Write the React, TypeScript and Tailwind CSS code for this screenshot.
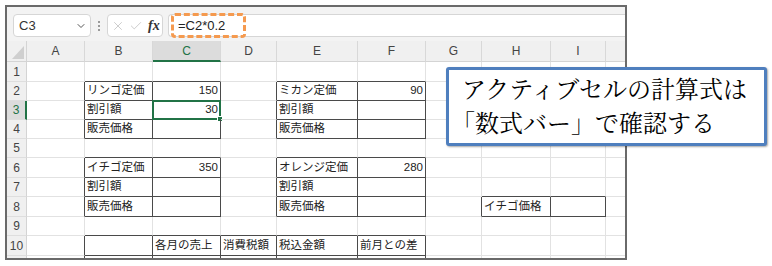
import { Check, ChevronDown, X } from "lucide-react";

type Cell = { t?: string; n?: boolean };

const COL_W = ["w-[20px]", "w-[58px]", "w-[68px]", "w-[68px]", "w-[56px]", "w-[81px]", "w-[68px]", "w-[56px]", "w-[69px]", "w-[55px]", "w-[40px]"];
const LETTERS = ["", "A", "B", "C", "D", "E", "F", "G", "H", "I", ""];
const ROW_H = ["h-[20px]", "h-[19px]", "h-[19px]", "h-[19px]", "h-[19px]", "h-[20px]", "h-[19px]", "h-[20px]", "h-[19px]", "h-[20px]", "h-[20px]"];

// row number -> column index -> cell
const DATA: Record<number, Record<number, Cell>> = {
  2: { 2: { t: "リンゴ定価" }, 3: { t: "150", n: true }, 5: { t: "ミカン定価" }, 6: { t: "90", n: true } },
  3: { 2: { t: "割引額" }, 3: { t: "30", n: true }, 5: { t: "割引額" } },
  4: { 2: { t: "販売価格" }, 5: { t: "販売価格" } },
  6: { 2: { t: "イチゴ定価" }, 3: { t: "350", n: true }, 5: { t: "オレンジ定価" }, 6: { t: "280", n: true } },
  7: { 2: { t: "割引額" }, 5: { t: "割引額" } },
  8: { 2: { t: "販売価格" }, 5: { t: "販売価格" }, 8: { t: "イチゴ価格" } },
  10: { 3: { t: "各月の売上" }, 4: { t: "消費税額" }, 5: { t: "税込金額" }, 6: { t: "前月との差" } },
};

function boxed(r: number, c: number) {
  if ((r >= 2 && r <= 4) || (r >= 6 && r <= 8)) {
    if ([2, 3, 5, 6].includes(c)) return true;
  }
  if (r === 8 && (c === 8 || c === 9)) return true;
  if (r >= 10 && c >= 2 && c <= 6) return true;
  return false;
}

function HeaderRow() {
  return (
    <div className="flex h-[21px] bg-[#f0f0f0]">
      {LETTERS.map((l, c) => {
        if (c === 0) {
          return (
            <div key={c} className={`${COL_W[c]} shrink-0 border-r border-b border-[#d4d4d4] flex items-end justify-end p-[2px]`}>
              <svg width="12" height="13" viewBox="0 0 12 13">
                <polygon points="12,0 12,13 0,13" fill="#cfcfcf" />
              </svg>
            </div>
          );
        }
        const active = c === 3;
        return (
          <div
            key={c}
            className={`${COL_W[c]} shrink-0 flex items-center justify-center border-r border-[#d8d8d8] text-[12px] ${
              active ? "bg-[#dcdcdc] text-[#217346] border-b-2 border-b-[#217346]" : "text-[#444] border-b border-b-[#d4d4d4]"
            }`}
          >
            {l}
          </div>
        );
      })}
    </div>
  );
}

function Row({ r }: { r: number }) {
  const row = DATA[r] || {};
  return (
    <div className={`flex ${ROW_H[r - 1]}`}>
      {COL_W.map((w, c) => {
        if (c === 0) {
          const active = r === 3;
          return (
            <div
              key={c}
              className={`${w} shrink-0 flex items-center justify-center text-[12px] border-b border-b-[#dedede] ${
                active ? "bg-[#dcdcdc] text-[#217346] border-r-2 border-r-[#217346]" : "bg-[#f0f0f0] text-[#444] border-r border-r-[#d4d4d4]"
              }`}
            >
              {r <= 10 ? r : ""}
            </div>
          );
        }
        const cell = row[c];
        const darkR = boxed(r, c) || boxed(r, c + 1);
        const darkB = boxed(r, c) || boxed(r + 1, c);
        return (
          <div
            key={c}
            className={`${w} shrink-0 relative flex items-center px-[2px] text-[11.5px] text-[#222] border-r border-b ${
              darkR ? "border-r-[#4a4a4a]" : "border-r-[#e2e2e2]"
            } ${darkB ? "border-b-[#4a4a4a]" : "border-b-[#e2e2e2]"} ${cell?.n ? "justify-end" : "justify-start"}`}
          >
            <span className="whitespace-nowrap">{cell?.t}</span>
            {r === 3 && c === 3 && (
              <div className="absolute -left-px -top-px -right-px -bottom-px border-2 border-[#217346]">
                <div className="absolute -right-[4px] -bottom-[4px] w-[6px] h-[6px] bg-[#217346] border border-white" />
              </div>
            )}
          </div>
        );
      })}
    </div>
  );
}

export default function App() {
  return (
    <div className="relative w-[772px] h-[266px] bg-white overflow-hidden font-['Liberation_Sans','Noto_Sans_CJK_JP',sans-serif]">
      <div className="ml-[5px] mt-[5px] w-[622px] h-[255px] border-2 border-[#6a6a6a] overflow-hidden bg-white">
        {/* formula bar */}
        <div className="flex items-start h-[34px] bg-[#f3f3f3] pl-[6px] pt-[7px]">
          <div className="w-[78px] h-[23px] shrink-0 rounded-[4px] border border-[#d6d6d6] bg-white flex items-center justify-between pl-[5px] pr-[3px] text-[13px] text-[#333]">
            <span>C3</span>
            <ChevronDown size={12} strokeWidth={2} color="#555" />
          </div>
          <div className="ml-[7px] h-[23px] flex flex-col justify-center gap-[2px]">
            <div className="w-[2px] h-[2px] bg-[#9a9a9a]" />
            <div className="w-[2px] h-[2px] bg-[#9a9a9a]" />
            <div className="w-[2px] h-[2px] bg-[#9a9a9a]" />
          </div>
          <div className="ml-[7px] w-[56px] h-[23px] shrink-0 rounded-[4px] border border-[#d6d6d6] bg-white flex items-center pl-[3px]">
            <X size={14} strokeWidth={1.2} color="#b8b8b8" />
            <Check size={14} strokeWidth={1.2} color="#b8b8b8" className="ml-[4px]" />
            <span className="ml-[5px] italic font-semibold text-[14px] text-[#333] font-['Liberation_Serif',serif]">fx</span>
          </div>
          <div className="ml-[5px] flex-1 h-[23px] border border-[#d6d6d6] border-r-0 rounded-l-[4px] bg-white flex items-center pl-[9px] text-[13px] text-[#222]">
            =C2*0.2
          </div>
        </div>
        <HeaderRow />
        {[1, 2, 3, 4, 5, 6, 7, 8, 9, 10, 11].map((r) => (
          <Row key={r} r={r} />
        ))}
      </div>

      {/* annotation: dashed box around formula */}
      <div className="absolute left-[171px] top-[13px] w-[75px] h-[25px] rounded-[4px] border-[3px] border-dashed border-[#f59a4f]" />

      {/* callout */}
      <div className="absolute left-[446px] top-[67px] w-[321px] h-[79px] rounded-[3px] border-[3px] border-[#4f7fbe] bg-white shadow-[1px_1px_2px_rgba(0,0,0,0.35)] pl-[13px] pt-[1px] text-[24px] leading-[34px] text-black font-['Noto_Serif_CJK_JP','Noto_Sans_CJK_JP',serif] whitespace-nowrap">
        <div>アクティブセルの計算式は</div>
        <div className="-ml-[11px]">「数式バー」で確認する</div>
      </div>
    </div>
  );
}
